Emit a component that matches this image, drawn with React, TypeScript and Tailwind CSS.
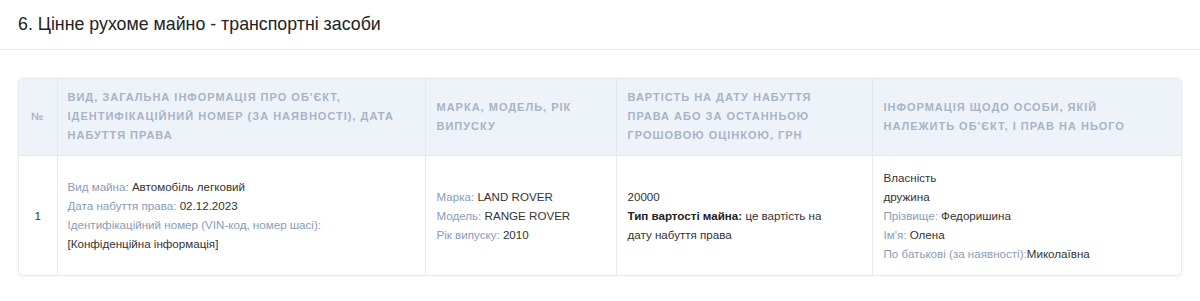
// Declaration section 6: valuable movable property (vehicles).
// One table, header row + a single vehicle row.

const label = "text-[#8a9bb5]";
const value = "text-[#333]";

export default function App() {
  return (
    <div className="min-h-[301px] bg-white font-['Liberation_Sans',Arial,sans-serif]">
      <div className="h-[50px] border-b border-[#ececec] px-[18px] pt-[13px] text-[17.8px] leading-[22px] text-[#222]">
        6. Цінне рухоме майно - транспортні засоби
      </div>

      <div className="mx-[18px] mt-[28px] overflow-hidden rounded-[4px] border border-[#e6eaf0] shadow-[0_0_4px_rgba(0,0,0,0.06)]">
        <table className="w-full table-fixed border-collapse">
          <colgroup>
            <col className="w-[38px]" />
            <col className="w-[368px]" />
            <col className="w-[191px]" />
            <col className="w-[256px]" />
            <col />
          </colgroup>
          <thead>
            <tr className="h-[76px] bg-[#eef3f9] text-left align-middle text-[11px] font-bold uppercase leading-[19px] tracking-[1px] text-[#a6b3c7]">
              <th className="border-r border-[#e2e8f0] text-center">№</th>
              <th className="border-r border-[#e2e8f0] pl-[10px] pr-[12px]">
                Вид, загальна інформація про об'єкт, ідентифікаційний номер (за наявності), дата набуття права
              </th>
              <th className="border-r border-[#e2e8f0] pl-[11px] pr-[30px]">Марка, модель, рік випуску</th>
              <th className="border-r border-[#e2e8f0] pl-[11px] pr-[30px]">
                Вартість на дату набуття права або за останньою грошовою оцінкою, грн
              </th>
              <th className="pl-[11px] pr-[30px]">Інформація щодо особи, якій належить об'єкт, і прав на нього</th>
            </tr>
          </thead>
          <tbody>
            <tr className="h-[120px] border-t border-[#e6eaf0] align-middle text-[11.6px] leading-[19px]">
              <td className={`border-r border-[#e6eaf0] text-center ${value}`}>1</td>
              <td className="border-r border-[#e6eaf0] pl-[10px] pr-[12px]">
                <div>
                  <span className={label}>Вид майна: </span>
                  <span className={value}>Автомобіль легковий</span>
                </div>
                <div>
                  <span className={label}>Дата набуття права: </span>
                  <span className={value}>02.12.2023</span>
                </div>
                <div className={label}>Ідентифікаційний номер (VIN-код, номер шасі):</div>
                <div className={value}>[Конфіденційна інформація]</div>
              </td>
              <td className="border-r border-[#e6eaf0] pl-[11px] pr-[12px]">
                <div>
                  <span className={label}>Марка: </span>
                  <span className={value}>LAND ROVER</span>
                </div>
                <div>
                  <span className={label}>Модель: </span>
                  <span className={value}>RANGE ROVER</span>
                </div>
                <div>
                  <span className={label}>Рік випуску: </span>
                  <span className={value}>2010</span>
                </div>
              </td>
              <td className={`border-r border-[#e6eaf0] pl-[11px] pr-[40px] ${value}`}>
                <div>20000</div>
                <p>
                  <b className="text-[#222]">Тип вартості майна:</b> це вартість на дату набуття права
                </p>
              </td>
              <td className="pl-[11px] pr-[12px]">
                <div className={value}>Власність</div>
                <div className={value}>дружина</div>
                <div>
                  <span className={label}>Прізвище: </span>
                  <span className={value}>Федоришина</span>
                </div>
                <div>
                  <span className={label}>Ім'я: </span>
                  <span className={value}>Олена</span>
                </div>
                <div>
                  <span className={label}>По батькові (за наявності):</span>
                  <span className={value}>Миколаївна</span>
                </div>
              </td>
            </tr>
          </tbody>
        </table>
      </div>
    </div>
  );
}
